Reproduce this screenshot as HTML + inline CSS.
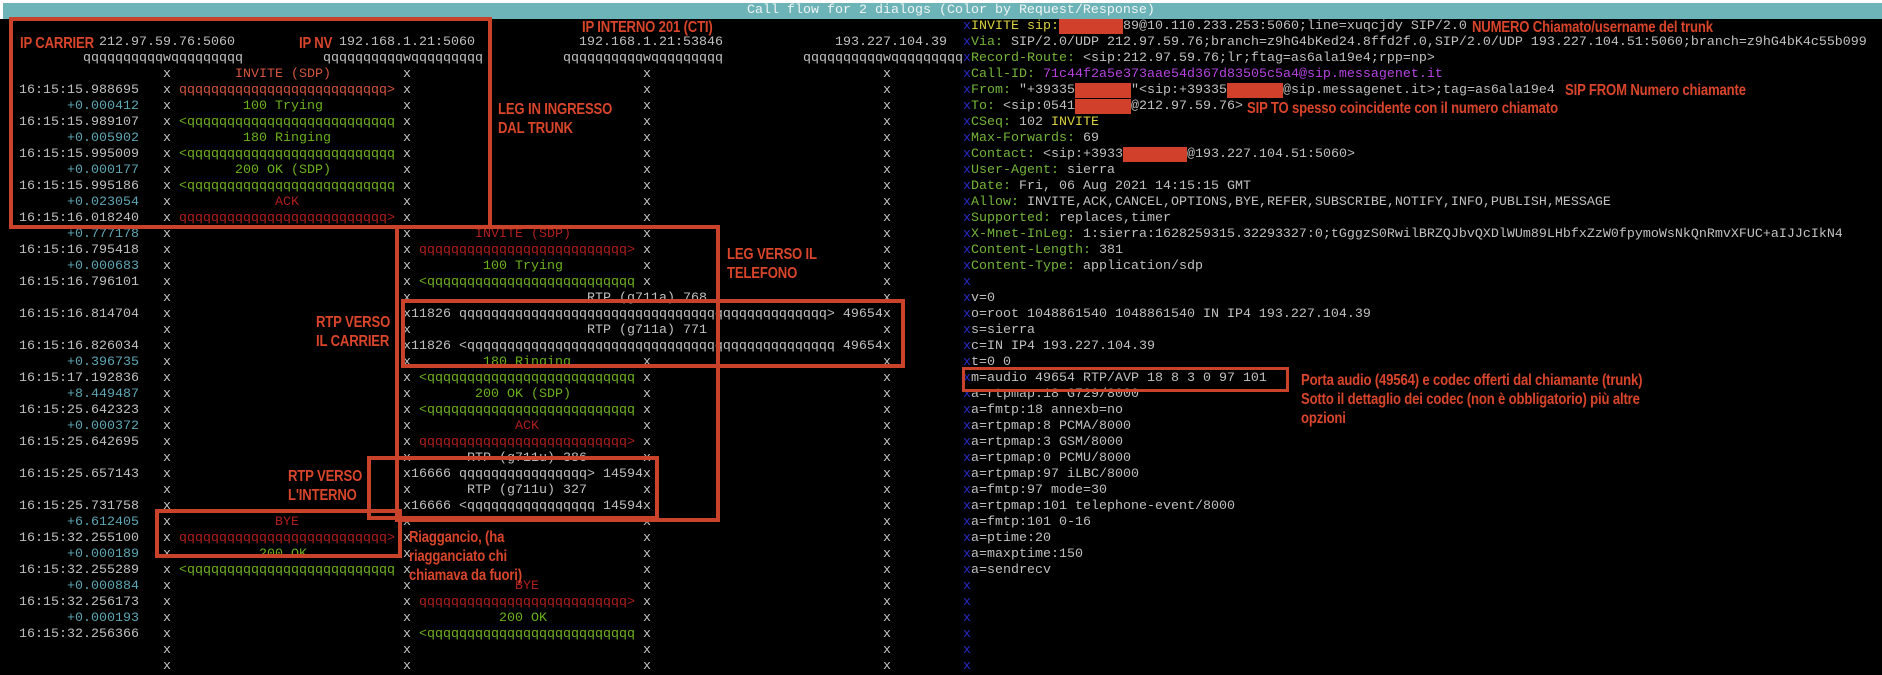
<!DOCTYPE html>
<html><head><meta charset="utf-8">
<style>
html,body{margin:0;padding:0;width:1882px;height:675px;overflow:hidden;background:#000;position:relative}
.t{position:absolute;white-space:pre;font-family:"Liberation Mono",monospace;font-size:13.333px;line-height:16px;color:#c0c0c0}
.col{position:absolute;width:8px;font-family:"Liberation Mono",monospace;font-size:13.333px;line-height:16px;color:#c8c8c8;white-space:normal;word-break:normal}
.g{color:#c0c0c0}.gr{color:#6cb01e}.r{color:#d4553f}.d{color:#b01e1e}.tl{color:#5ea6b4}.y{color:#d8d040}.m{color:#b443e0}.hb{color:#74b43a}
.blk{background:#d0402a}
.a{position:absolute;font-family:"Liberation Sans",sans-serif;font-weight:bold;font-size:16px;line-height:19px;color:#d9452b;white-space:nowrap;transform:scaleX(0.82);transform-origin:0 0;letter-spacing:-0.2px}
.bx{position:absolute;border:4px solid #c9432a;box-sizing:border-box}
</style></head><body>
<div style="position:absolute;left:0;top:0;width:1882px;height:3px;background:#fff"></div>
<div style="position:absolute;left:0;top:0;width:3px;height:19px;background:#fff"></div>
<div style="position:absolute;left:3px;top:3px;width:1879px;height:16px;background:#6cb4b8"></div>
<div class="t" style="left:747px;top:3px;color:#f0f4f4">Call flow for 2 dialogs (Color by Request/Response)</div>

<div class="t" style="left:99px;top:35px">212.97.59.76:5060</div>
<div class="t" style="left:339px;top:35px">192.168.1.21:5060</div>
<div class="t" style="left:579px;top:35px">192.168.1.21:53846</div>
<div class="t" style="left:835px;top:35px">193.227.104.39</div>
<div class="t" style="left:83px;top:51px">qqqqqqqqqqwqqqqqqqqq</div>
<div class="t" style="left:323px;top:51px">qqqqqqqqqqwqqqqqqqqq</div>
<div class="t" style="left:563px;top:51px">qqqqqqqqqqwqqqqqqqqq</div>
<div class="t" style="left:803px;top:51px">qqqqqqqqqqwqqqqqqqqq</div>

<div class="t" style="left:19px;top:67px;width:120px;text-align:right">
<span class="g">16:15:15.988695</span>
<span class="tl">+0.000412</span>
<span class="g">16:15:15.989107</span>
<span class="tl">+0.005902</span>
<span class="g">16:15:15.995009</span>
<span class="tl">+0.000177</span>
<span class="g">16:15:15.995186</span>
<span class="tl">+0.023054</span>
<span class="g">16:15:16.018240</span>
<span class="tl">+0.777178</span>
<span class="g">16:15:16.795418</span>
<span class="tl">+0.000683</span>
<span class="g">16:15:16.796101</span>

<span class="g">16:15:16.814704</span>

<span class="g">16:15:16.826034</span>
<span class="tl">+0.396735</span>
<span class="g">16:15:17.192836</span>
<span class="tl">+8.449487</span>
<span class="g">16:15:25.642323</span>
<span class="tl">+0.000372</span>
<span class="g">16:15:25.642695</span>

<span class="g">16:15:25.657143</span>

<span class="g">16:15:25.731758</span>
<span class="tl">+6.612405</span>
<span class="g">16:15:32.255100</span>
<span class="tl">+0.000189</span>
<span class="g">16:15:32.255289</span>
<span class="tl">+0.000884</span>
<span class="g">16:15:32.256173</span>
<span class="tl">+0.000193</span>
<span class="g">16:15:32.256366</span></div>

<div class="col" style="left:163px;top:67px">x x x x x x x x x x x x x x x x x x x x x x x x x x x x x x x x x x x x x x</div>
<div class="col" style="left:403px;top:67px">x x x x x x x x x x x x x x x x x x x x x x x x x x x x x x x x x x x x x x</div>
<div class="col" style="left:643px;top:67px">x x x x x x x x x x x x x x</div>
<div class="col" style="left:643px;top:355px">x x x x x x x x x x x x x x x x x x x x</div>
<div class="col" style="left:883px;top:67px">x x x x x x x x x x x x x x x x x x x x x x x x x x x x x x x x x x x x x x</div>
<div class="col" style="left:963px;top:19px;color:#2a2ad0">x x x x x x x x x x x x x x x x x x x x x x x x x x x x x x x x x x x x x x x x x</div>

<div class="t r" style="left:235px;top:67px">INVITE (SDP)</div>
<div class="t r" style="left:179px;top:83px">qqqqqqqqqqqqqqqqqqqqqqqqqq&gt;</div>
<div class="t gr" style="left:243px;top:99px">100 Trying</div>
<div class="t gr" style="left:179px;top:115px">&lt;qqqqqqqqqqqqqqqqqqqqqqqqqq</div>
<div class="t gr" style="left:243px;top:131px">180 Ringing</div>
<div class="t gr" style="left:179px;top:147px">&lt;qqqqqqqqqqqqqqqqqqqqqqqqqq</div>
<div class="t gr" style="left:235px;top:163px">200 OK (SDP)</div>
<div class="t gr" style="left:179px;top:179px">&lt;qqqqqqqqqqqqqqqqqqqqqqqqqq</div>
<div class="t d" style="left:275px;top:195px">ACK</div>
<div class="t d" style="left:179px;top:211px">qqqqqqqqqqqqqqqqqqqqqqqqqq&gt;</div>
<div class="t d" style="left:475px;top:227px">INVITE (SDP)</div>
<div class="t d" style="left:419px;top:243px">qqqqqqqqqqqqqqqqqqqqqqqqqq&gt;</div>
<div class="t gr" style="left:483px;top:259px">100 Trying</div>
<div class="t gr" style="left:419px;top:275px">&lt;qqqqqqqqqqqqqqqqqqqqqqqqqq</div>
<div class="t" style="left:587px;top:291px">RTP (g711a) 768</div>
<div class="t" style="left:411px;top:307px">11826 qqqqqqqqqqqqqqqqqqqqqqqqqqqqqqqqqqqqqqqqqqqqqq&gt; 49654</div>
<div class="t" style="left:587px;top:323px">RTP (g711a) 771</div>
<div class="t" style="left:411px;top:339px">11826 &lt;qqqqqqqqqqqqqqqqqqqqqqqqqqqqqqqqqqqqqqqqqqqqqq 49654</div>
<div class="t gr" style="left:483px;top:355px">180 Ringing</div>
<div class="t gr" style="left:419px;top:371px">&lt;qqqqqqqqqqqqqqqqqqqqqqqqqq</div>
<div class="t gr" style="left:475px;top:387px">200 OK (SDP)</div>
<div class="t gr" style="left:419px;top:403px">&lt;qqqqqqqqqqqqqqqqqqqqqqqqqq</div>
<div class="t d" style="left:515px;top:419px">ACK</div>
<div class="t d" style="left:419px;top:435px">qqqqqqqqqqqqqqqqqqqqqqqqqq&gt;</div>
<div class="t" style="left:467px;top:451px">RTP (g711u) 386</div>
<div class="t" style="left:411px;top:467px">16666 qqqqqqqqqqqqqqqq&gt; 14594</div>
<div class="t" style="left:467px;top:483px">RTP (g711u) 327</div>
<div class="t" style="left:411px;top:499px">16666 &lt;qqqqqqqqqqqqqqqq 14594</div>
<div class="t d" style="left:275px;top:515px">BYE</div>
<div class="t d" style="left:179px;top:531px">qqqqqqqqqqqqqqqqqqqqqqqqqq&gt;</div>
<div class="t gr" style="left:259px;top:547px">200 OK</div>
<div class="t gr" style="left:179px;top:563px">&lt;qqqqqqqqqqqqqqqqqqqqqqqqqq</div>
<div class="t d" style="left:515px;top:579px">BYE</div>
<div class="t d" style="left:419px;top:595px">qqqqqqqqqqqqqqqqqqqqqqqqqq&gt;</div>
<div class="t gr" style="left:499px;top:611px">200 OK</div>
<div class="t gr" style="left:419px;top:627px">&lt;qqqqqqqqqqqqqqqqqqqqqqqqqq</div>

<div class="t" style="left:971px;top:19px"><span class="y">INVITE sip:</span><span class="blk">        </span>89@10.110.233.253:5060;line=xuqcjdy SIP/2.0
<span class="hb">Via:</span> SIP/2.0/UDP 212.97.59.76;branch=z9hG4bKed24.8ffd2f.0,SIP/2.0/UDP 193.227.104.51:5060;branch=z9hG4bK4c55b099
<span class="hb">Record-Route:</span> &lt;sip:212.97.59.76;lr;ftag=as6ala19e4;rpp=np&gt;
<span class="hb">Call-ID:</span> <span class="m">71c44f2a5e373aae54d367d83505c5a4@sip.messagenet.it</span>
<span class="hb">From:</span> "+39335<span class="blk">       </span>"&lt;sip:+39335<span class="blk">       </span>@sip.messagenet.it&gt;;tag=as6ala19e4
<span class="hb">To:</span> &lt;sip:0541<span class="blk">       </span>@212.97.59.76&gt;
<span class="hb">CSeq:</span> 102 <span class="y">INVITE</span>
<span class="hb">Max-Forwards:</span> 69
<span class="hb">Contact:</span> &lt;sip:+3933<span class="blk">        </span>@193.227.104.51:5060&gt;
<span class="hb">User-Agent:</span> sierra
<span class="hb">Date:</span> Fri, 06 Aug 2021 14:15:15 GMT
<span class="hb">Allow:</span> INVITE,ACK,CANCEL,OPTIONS,BYE,REFER,SUBSCRIBE,NOTIFY,INFO,PUBLISH,MESSAGE
<span class="hb">Supported:</span> replaces,timer
<span class="hb">X-Mnet-InLeg:</span> 1:sierra:1628259315.32293327:0;tGggzS0RwilBRZQJbvQXDlWUm89LHbfxZzW0fpymoWsNkQnRmvXFUC+aIJJcIkN4
<span class="hb">Content-Length:</span> 381
<span class="hb">Content-Type:</span> application/sdp

v=0
o=root 1048861540 1048861540 IN IP4 193.227.104.39
s=sierra
c=IN IP4 193.227.104.39
t=0 0
m=audio 49654 RTP/AVP 18 8 3 0 97 101
a=rtpmap:18 G729/8000
a=fmtp:18 annexb=no
a=rtpmap:8 PCMA/8000
a=rtpmap:3 GSM/8000
a=rtpmap:0 PCMU/8000
a=rtpmap:97 iLBC/8000
a=fmtp:97 mode=30
a=rtpmap:101 telephone-event/8000
a=fmtp:101 0-16
a=ptime:20
a=maxptime:150
a=sendrecv</div>

<div class="bx" style="left:9px;top:17px;width:483px;height:212px"></div>
<div class="bx" style="left:395px;top:225px;width:325px;height:297px"></div>
<div class="bx" style="left:401px;top:299px;width:504px;height:69px"></div>
<div class="bx" style="left:367px;top:456px;width:292px;height:64px"></div>
<div class="bx" style="left:155px;top:509px;width:247px;height:49px"></div>
<div class="bx" style="left:962px;top:367px;width:327px;height:25px;border-width:3px"></div>

<div class="a" style="left:20px;top:34px">IP CARRIER</div>
<div class="a" style="left:299px;top:34px">IP NV</div>
<div class="a" style="left:582px;top:18px">IP INTERNO 201 (CTI)</div>
<div class="a" style="left:498px;top:100px">LEG IN INGRESSO<br>DAL TRUNK</div>
<div class="a" style="left:727px;top:245px">LEG VERSO IL<br>TELEFONO</div>
<div class="a" style="left:316px;top:313px">RTP VERSO<br>IL CARRIER</div>
<div class="a" style="left:288px;top:467px">RTP VERSO<br>L'INTERNO</div>
<div class="a" style="left:409px;top:528px">Riaggancio, (ha<br>riagganciato chi<br>chiamava da fuori)</div>
<div class="a" style="left:1472px;top:18px">NUMERO Chiamato/username del trunk</div>
<div class="a" style="left:1565px;top:81px">SIP FROM Numero chiamante</div>
<div class="a" style="left:1247px;top:99px">SIP TO spesso coincidente con il numero chiamato</div>
<div class="a" style="left:1301px;top:371px">Porta audio (49564) e codec offerti dal chiamante (trunk)<br>Sotto il dettaglio dei codec (non è obbligatorio) più altre<br>opzioni</div>
</body></html>
